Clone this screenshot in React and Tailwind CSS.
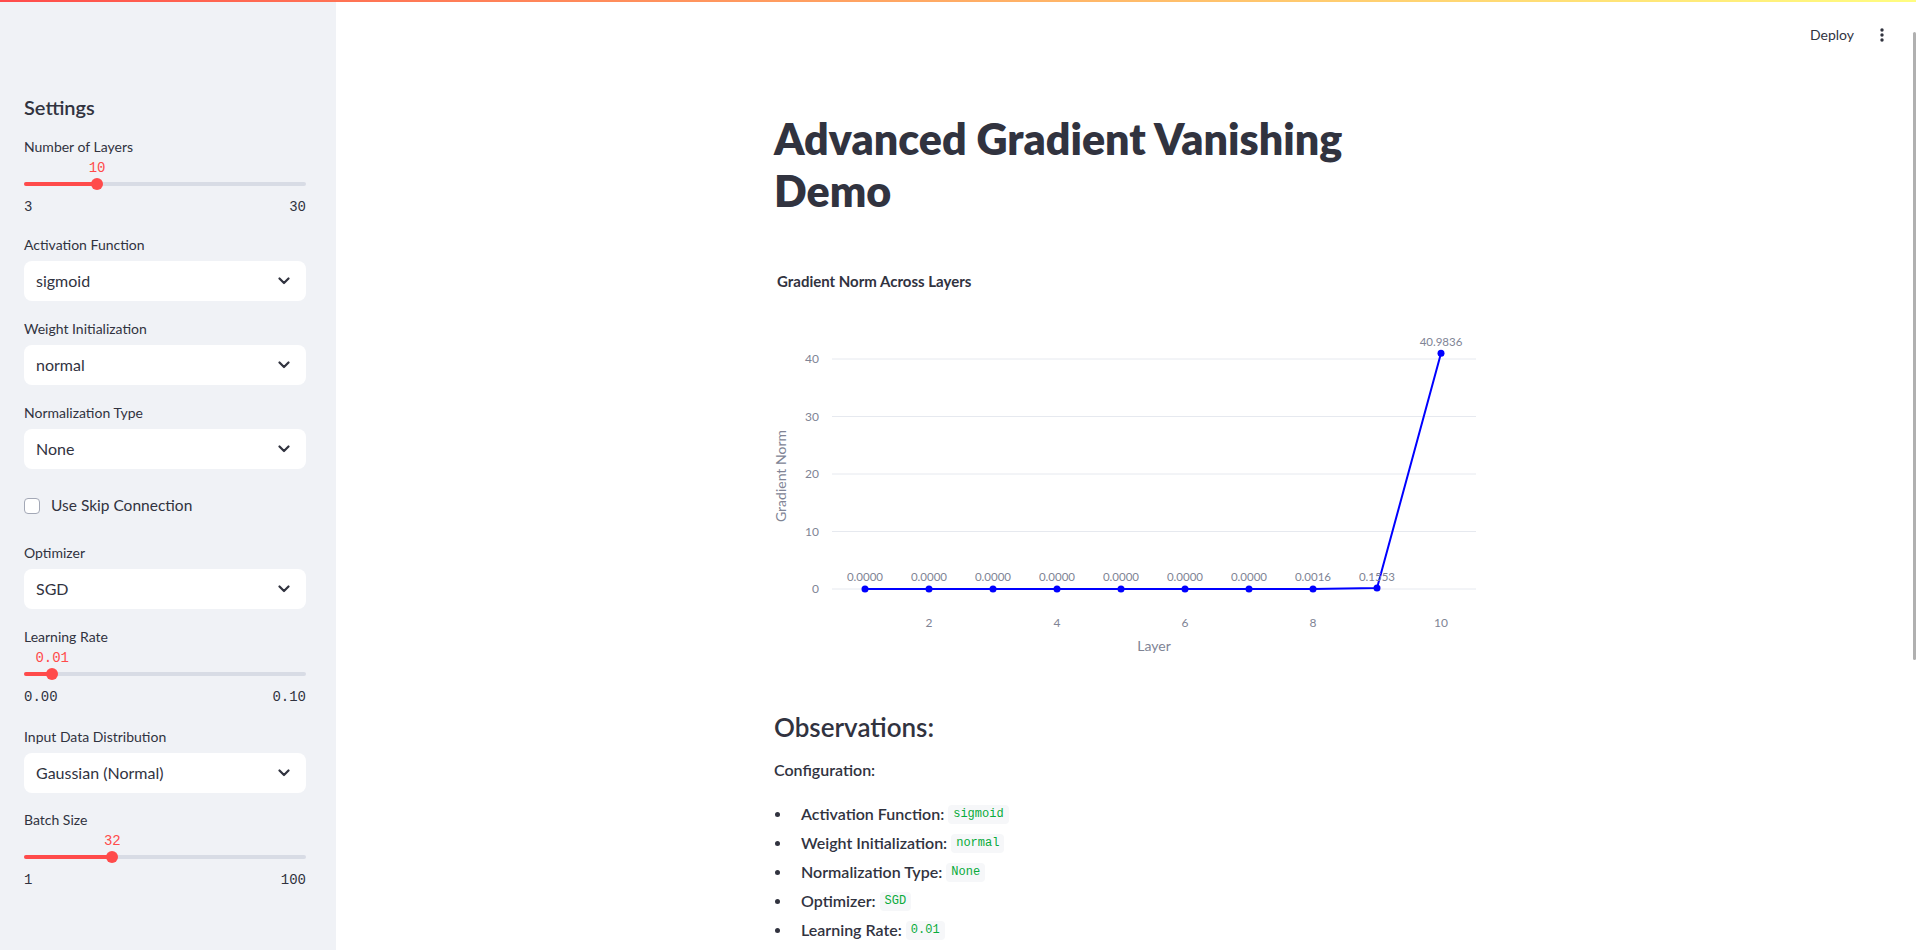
import React from 'react';

const sans = "font-['Lato','Noto_Sans',sans-serif]";
const mono = "font-['Liberation_Mono',monospace]";

const Chevron = () => (
  <svg width="12" height="8" viewBox="0 0 12 8" className="shrink-0">
    <path d="M1.5 1.5 L6 6 L10.5 1.5" fill="none" stroke="#31333f" strokeWidth="2.2" strokeLinecap="round" strokeLinejoin="round" />
  </svg>
);

const Slider = ({ label, min, max, value, fmt = (v) => String(v), className = '' }) => {
  const pct = ((value - min) / (max - min)) * 100;
  return (
    <div className={className}>
      <div className="text-sm leading-5">{label}</div>
      <div className="relative mt-px h-5">
        <span
          className={`absolute top-0 -translate-x-1/2 text-sm leading-5 text-[#ff4b4b] ${mono}`}
          style={{ left: `${pct}%` }}
        >
          {fmt(value)}
        </span>
      </div>
      <div className="relative h-3">
        <div className="absolute left-0 right-0 top-1 h-1 rounded-full bg-[#d8dce5]" />
        <div className="absolute left-0 top-1 h-1 rounded-full bg-[#ff4b4b]" style={{ width: `${pct}%` }} />
        <div className="absolute top-0 -ml-1.5 h-3 w-3 rounded-full bg-[#ff4b4b]" style={{ left: `${pct}%` }} />
      </div>
      <div className={`mt-[7px] flex justify-between text-sm leading-5 ${mono}`}>
        <span>{fmt(min)}</span>
        <span>{fmt(max)}</span>
      </div>
    </div>
  );
};

const Select = ({ label, value, className = '' }) => (
  <div className={className}>
    <div className="text-sm leading-5">{label}</div>
    <div className="mt-1.5 flex h-10 items-center justify-between rounded-lg bg-white pl-3 pr-4">
      <span className="text-base">{value}</span>
      <Chevron />
    </div>
  </div>
);

const data = [0, 0, 0, 0, 0, 0, 0, 0.0016, 0.1553, 40.9836];
const X = (l) => 91 + (l - 1) * 64;
const Y = (v) => 327 - v * 5.75;

const Chart = () => (
  <svg width="704" height="449" className="block overflow-visible">
    <text x="3" y="25" fontSize="15" fontWeight="700" fill="#31333f">Gradient Norm Across Layers</text>
    {[0, 10, 20, 30, 40].map((v) => (
      <g key={v}>
        <line x1="58" x2="702" y1={Y(v)} y2={Y(v)} stroke="#e6e9ef" strokeWidth="1" />
        <text x="45" y={Y(v) + 4} textAnchor="end" fontSize="12" fill="#808495">{v}</text>
      </g>
    ))}
    {[2, 4, 6, 8, 10].map((l) => (
      <text key={l} x={X(l)} y="365" textAnchor="middle" fontSize="12" fill="#808495">{l}</text>
    ))}
    <text x="380" y="389" textAnchor="middle" fontSize="14" fill="#808495">Layer</text>
    <text transform="translate(12,214) rotate(-90)" textAnchor="middle" fontSize="14" fill="#808495">Gradient Norm</text>
    <polyline
      points={data.map((v, i) => `${X(i + 1)},${Y(v)}`).join(' ')}
      fill="none"
      stroke="#0000ff"
      strokeWidth="2"
    />
    {data.map((v, i) => (
      <circle key={i} cx={X(i + 1)} cy={Y(v)} r="3.5" fill="#0000ff" />
    ))}
    {data.map((v, i) => (
      <text
        key={i}
        x={X(i + 1)}
        y={i === 9 ? 84 : 319}
        textAnchor="middle"
        fontSize="11.5"
        fill="#808495"
      >
        {v.toFixed(4)}
      </text>
    ))}
  </svg>
);

const config = [
  ['Activation Function:', 'sigmoid'],
  ['Weight Initialization:', 'normal'],
  ['Normalization Type:', 'None'],
  ['Optimizer:', 'SGD'],
  ['Learning Rate:', '0.01'],
];

export default function App() {
  return (
    <div className={`relative flex h-[950px] w-[1916px] overflow-hidden bg-white text-[#31333f] ${sans}`}>
      <div className="absolute left-0 right-0 top-0 z-10 h-[2px] bg-linear-to-r from-[#ff4b4b] to-[#fffd80]" />

      <aside className="flex h-full w-[336px] shrink-0 flex-col bg-[#f0f2f6] pl-6 pr-[30px] pt-[93px]">
        <h2 className="text-[20px] font-semibold leading-7">Settings</h2>
        <Slider className="mt-4" label="Number of Layers" min={3} max={30} value={10} />
        <Select className="mt-[18px]" label="Activation Function" value="sigmoid" />
        <Select className="mt-[18px]" label="Weight Initialization" value="normal" />
        <Select className="mt-[18px]" label="Normalization Type" value="None" />
        <label className="mt-[25px] flex h-6 items-center">
          <span className="h-4 w-4 rounded-[4px] border border-[#a3a8b6] bg-white" />
          <span className="ml-[11px] text-[15.5px]">Use Skip Connection</span>
        </label>
        <Select className="mt-[25px]" label="Optimizer" value="SGD" />
        <Slider
          className="mt-[18px]"
          label="Learning Rate"
          min={0}
          max={0.1}
          value={0.01}
          fmt={(v) => v.toFixed(2)}
        />
        <Select className="mt-5" label="Input Data Distribution" value="Gaussian (Normal)" />
        <Slider className="mt-[17px]" label="Batch Size" min={1} max={100} value={32} />
      </aside>

      <main className="flex min-w-0 flex-1 flex-col">
        <header className="flex h-[70px] shrink-0 items-center justify-end pr-8">
          <span className="text-sm">Deploy</span>
          <svg width="4" height="16" viewBox="0 0 4 16" className="ml-[26px]">
            <circle cx="2" cy="3" r="1.7" fill="#31333f" />
            <circle cx="2" cy="8" r="1.7" fill="#31333f" />
            <circle cx="2" cy="13" r="1.7" fill="#31333f" />
          </svg>
        </header>

        <div className="mx-auto w-[704px]">
          <h1 className="mt-[43px] max-w-[620px] text-[43px] font-extrabold leading-[52px]">
            Advanced Gradient Vanishing Demo
          </h1>

          <div className="mt-[45px]">
            <Chart />
          </div>

          <h3 className="text-[26px] font-semibold leading-8">Observations:</h3>
          <p className="mt-[15px] text-base font-semibold leading-6">Configuration:</p>

          <ul className="mt-5 flex flex-col gap-[5px]">
            {config.map(([k, v]) => (
              <li key={k} className="flex h-6 items-center">
                <span className="ml-px h-[5px] w-[5px] rounded-full bg-[#31333f]" />
                <span className="ml-[21px] text-base font-semibold">{k}</span>
                <code className={`ml-1 rounded bg-[#f6f7f9] px-[5px] py-[2px] text-xs leading-[15px] text-[#09ab3b] ${mono}`}>
                  {v}
                </code>
              </li>
            ))}
          </ul>
        </div>
      </main>

      <div className="absolute right-0 top-[32px] h-[628px] w-[3px] rounded-full bg-[#b0b0b0]" />
    </div>
  );
}
